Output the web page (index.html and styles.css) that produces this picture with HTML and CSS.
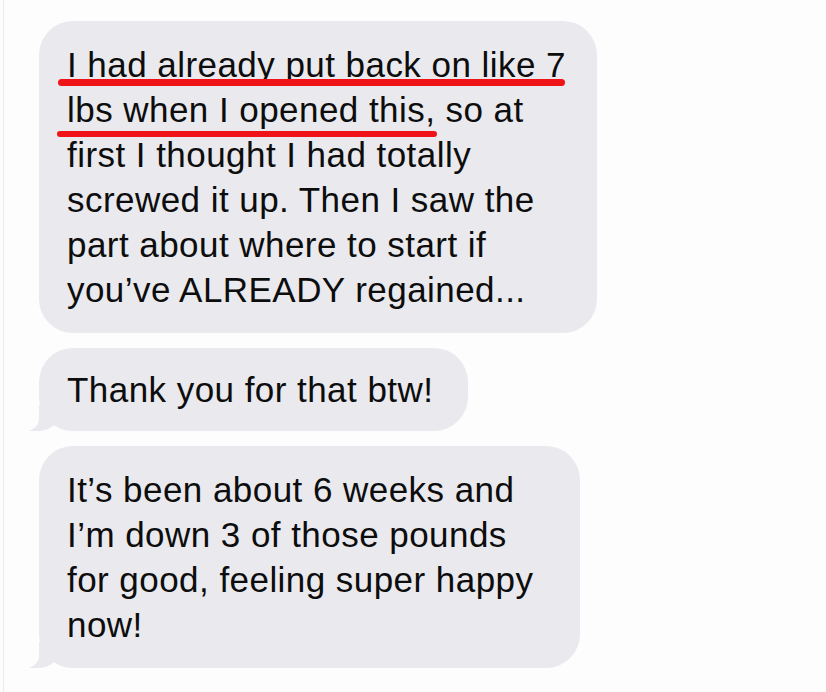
FILE: index.html
```html
<!DOCTYPE html>
<html lang="en">
<head>
<meta charset="utf-8">
<title>Messages</title>
<link rel="stylesheet" href="styles.css">
</head>
<body>
<div class="thread">
  <div class="bubble bubble--first">
    <span class="mark mark--one"></span>
    <span class="mark mark--two"></span>
    <span class="line">I had already put back on like 7</span>
    <span class="line">lbs when I opened this, so at</span>
    <span class="line">first I thought I had totally</span>
    <span class="line">screwed it up. Then I saw the</span>
    <span class="line">part about where to start if</span>
    <span class="line">you’ve ALREADY regained...</span>
  </div>
  <div class="bubble bubble--short bubble--tail">
    <span class="line">Thank you for that btw!</span>
  </div>
  <div class="bubble bubble--last bubble--tail">
    <span class="line">It’s been about 6 weeks and</span>
    <span class="line">I’m down 3 of those pounds</span>
    <span class="line">for good, feeling super happy</span>
    <span class="line">now!</span>
  </div>
</div>
</body>
</html>
```
FILE: styles.css
```css
html, body {
  margin: 0;
  padding: 0;
  background: #fdfdfd;
}

body {
  width: 826px;
  height: 692px;
  overflow: hidden;
}

.thread {
  margin-left: 3px;
  border-left: 1px solid #ececec;
  height: 692px;
  box-sizing: border-box;
  padding: 21px 0 0 35px;
  display: flex;
  flex-direction: column;
  align-items: flex-start;
  gap: 15px;
  font-family: "Liberation Sans", Arial, sans-serif;
  font-size: 35px;
  letter-spacing: 0.45px;
  line-height: 45px;
  color: #0d0d0d;
}

.bubble {
  position: relative;
  background: #e9e9ee;
  border-radius: 34px;
  padding: 21px 20px 21px 28px;
  box-sizing: border-box;
}

.line {
  display: block;
  white-space: nowrap;
}

.bubble--first { width: 558px; }
.bubble--short { width: 429px; padding-top: 19px; padding-bottom: 19px; }
.bubble--last { width: 541px; }

.bubble--tail::before {
  content: "";
  position: absolute;
  left: -9px;
  bottom: 0;
  width: 30px;
  height: 26px;
  background: #e9e9ee;
  border-bottom-right-radius: 22px 20px;
}

.bubble--tail::after {
  content: "";
  position: absolute;
  left: -14px;
  bottom: 0;
  width: 14px;
  height: 28px;
  background: #fdfdfd;
  border-bottom-right-radius: 14px 12px;
}

.mark {
  position: absolute;
  background: #f01419;
  border-radius: 4px;
}

.mark--one {
  left: 19px;
  top: 58px;
  width: 507px;
  height: 7px;
}

.mark--two {
  left: 18px;
  top: 110px;
  width: 380px;
  height: 6px;
}
```
